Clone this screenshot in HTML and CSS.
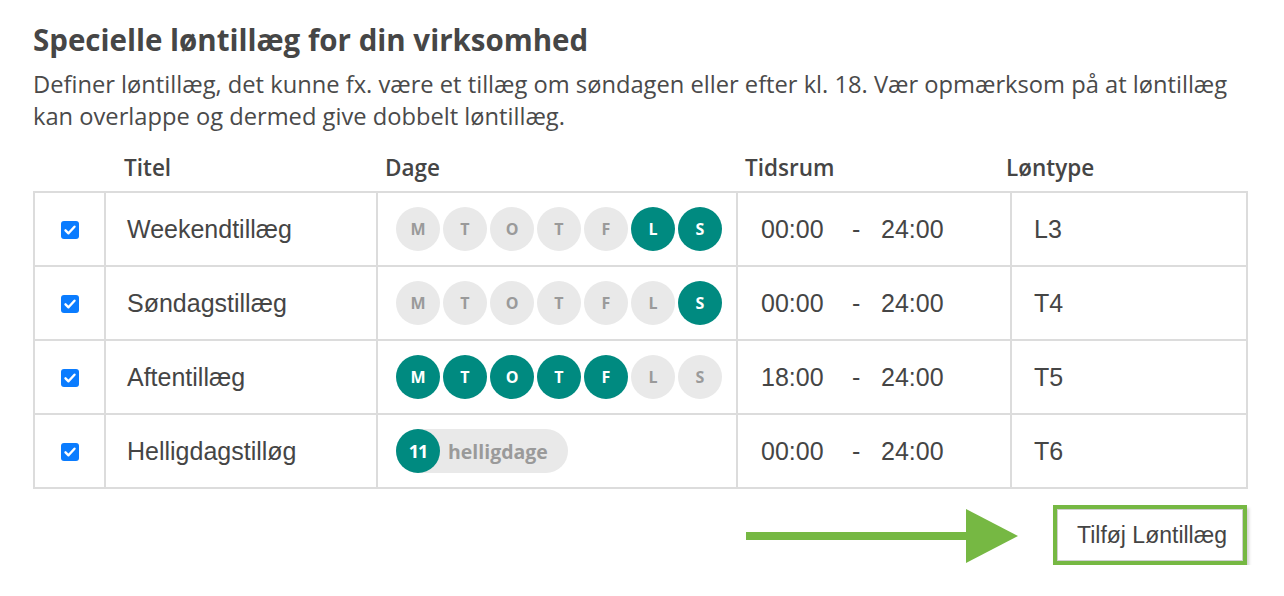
FILE: index.html
```html
<!DOCTYPE html>
<html lang="da">
<head>
<meta charset="utf-8">
<title>Specielle løntillæg</title>
<link rel="stylesheet" href="styles.css">
</head>
<body>
<main class="page">
  <h1 class="title">Specielle løntillæg for din virksomhed</h1>
  <p class="intro">Definer løntillæg, det kunne fx. være et tillæg om søndagen eller efter kl. 18. Vær opmærksom på at løntillæg kan overlappe og dermed give dobbelt løntillæg.</p>

  <div class="head">
    <span>Titel</span>
    <span>Dage</span>
    <span>Tidsrum</span>
    <span>Løntype</span>
  </div>

  <table class="grid">
    <tr>
      <td class="c-check"><span class="check"><svg viewBox="0 0 18 18" width="18" height="18"><path d="M4.5 9.3l3 3 6-6.6" fill="none" stroke="#fff" stroke-width="2.4" stroke-linecap="round" stroke-linejoin="round"/></svg></span></td>
      <td class="c-title">Weekendtillæg</td>
      <td class="c-days"><div class="days"><span class="day">M</span><span class="day">T</span><span class="day">O</span><span class="day">T</span><span class="day">F</span><span class="day on">L</span><span class="day on">S</span></div></td>
      <td class="c-time"><span class="t1">00:00</span><span class="dash">-</span><span>24:00</span></td>
      <td class="c-type">L3</td>
    </tr>
    <tr>
      <td class="c-check"><span class="check"><svg viewBox="0 0 18 18" width="18" height="18"><path d="M4.5 9.3l3 3 6-6.6" fill="none" stroke="#fff" stroke-width="2.4" stroke-linecap="round" stroke-linejoin="round"/></svg></span></td>
      <td class="c-title">Søndagstillæg</td>
      <td class="c-days"><div class="days"><span class="day">M</span><span class="day">T</span><span class="day">O</span><span class="day">T</span><span class="day">F</span><span class="day">L</span><span class="day on">S</span></div></td>
      <td class="c-time"><span class="t1">00:00</span><span class="dash">-</span><span>24:00</span></td>
      <td class="c-type">T4</td>
    </tr>
    <tr>
      <td class="c-check"><span class="check"><svg viewBox="0 0 18 18" width="18" height="18"><path d="M4.5 9.3l3 3 6-6.6" fill="none" stroke="#fff" stroke-width="2.4" stroke-linecap="round" stroke-linejoin="round"/></svg></span></td>
      <td class="c-title">Aftentillæg</td>
      <td class="c-days"><div class="days"><span class="day on">M</span><span class="day on">T</span><span class="day on">O</span><span class="day on">T</span><span class="day on">F</span><span class="day">L</span><span class="day">S</span></div></td>
      <td class="c-time"><span class="t1">18:00</span><span class="dash">-</span><span>24:00</span></td>
      <td class="c-type">T5</td>
    </tr>
    <tr>
      <td class="c-check"><span class="check"><svg viewBox="0 0 18 18" width="18" height="18"><path d="M4.5 9.3l3 3 6-6.6" fill="none" stroke="#fff" stroke-width="2.4" stroke-linecap="round" stroke-linejoin="round"/></svg></span></td>
      <td class="c-title">Helligdagstilløg</td>
      <td class="c-days"><div class="holiday"><span class="day on">11</span><span class="hol-label">helligdage</span></div></td>
      <td class="c-time"><span class="t1">00:00</span><span class="dash">-</span><span>24:00</span></td>
      <td class="c-type">T6</td>
    </tr>
  </table>

  <div class="actions">
    <svg class="arrow" width="274" height="54" viewBox="0 0 274 54"><rect x="0" y="23" width="225" height="8" fill="#76b843"/><polygon points="220,0 272,27 220,54" fill="#76b843"/></svg>
    <button class="add" type="button">Tilføj Løntillæg</button>
  </div>
</main>
</body>
</html>
```
FILE: styles.css
```css
* { box-sizing: border-box; }
html, body { margin: 0; padding: 0; background: #fff; }
body { font-family: "Open Sans", "Lato", sans-serif; color: #454545; }

.page { padding: 22px 0 0 33px; width: 1284px; }

.title {
  margin: 0;
  font-size: 29.5px;
  font-weight: 700;
  line-height: 36px;
  color: #464646;
}

.intro {
  margin: 10px 0 0;
  width: 1215px;
  font-size: 23.7px;
  line-height: 32px;
  color: #4a4a4a;
}

.head {
  display: grid;
  grid-template-columns: 261px 360px 261px auto;
  padding-left: 91px;
  margin-top: 18px;
  height: 34px;
  align-items: center;
  font-size: 22.5px;
  font-weight: 600;
  color: #454545;
}

.grid {
  margin-top: 7px;
  margin-left: 0;
  border-collapse: collapse;
  border: 2px solid #dcdcdc;
  font-family: "Liberation Sans", Arial, sans-serif;
  font-size: 25px;
  color: #454545;
}
.grid td {
  border: 2px solid #dcdcdc;
  height: 74px;
  padding: 0;
  vertical-align: middle;
}
.c-check { width: 71px; text-align: center; }
.c-title { width: 272px; padding-left: 21px !important; }
.c-days { width: 360px; padding-left: 18px !important; }
.c-time { width: 274px; padding-left: 23px !important; }
.c-type { width: 236px; padding-left: 22px !important; }

.check {
  display: inline-flex;
  width: 18px;
  height: 18px;
  border-radius: 3px;
  background: #0a7cff;
  vertical-align: middle;
  margin-top: -2px;
}

.days { display: flex; gap: 3px; }
.day {
  width: 44px;
  height: 44px;
  border-radius: 50%;
  background: #e9e9e9;
  color: #9a9a9a;
  display: flex;
  align-items: center;
  justify-content: center;
  font-family: "Open Sans", "Lato", sans-serif;
  font-weight: 700;
  font-size: 16px;
}
.day.on { background: #008a80; color: #fff; }

.holiday {
  display: inline-flex;
  align-items: center;
  background: #e9e9e9;
  border-radius: 22px;
  width: 172px;
  height: 44px;
}
.holiday .day { font-size: 18px; letter-spacing: -1px; }
.hol-label {
  font-family: "Open Sans", "Lato", sans-serif;
  font-weight: 700;
  font-size: 19.5px;
  color: #9a9a9a;
  padding-left: 8px;
}

.c-time span { display: inline-block; }
.t1 { width: 91px; }
.dash { width: 29px; }

.actions {
  display: flex;
  justify-content: flex-end;
  align-items: center;
  width: 1214px;
  margin-top: 16px;
  gap: 33px;
}
.arrow { display: block; margin-top: 2px; }
.add {
  width: 194px;
  height: 60px;
  border: 4px solid #76b843;
  background: #fff;
  box-shadow: inset 0 0 0 1px #cfcfcf, 2px 3px 3px rgba(0,0,0,0.18);
  font-family: "Liberation Sans", Arial, sans-serif;
  font-size: 23px;
  color: #444;
  padding: 0 0 0 4px;
}
```
